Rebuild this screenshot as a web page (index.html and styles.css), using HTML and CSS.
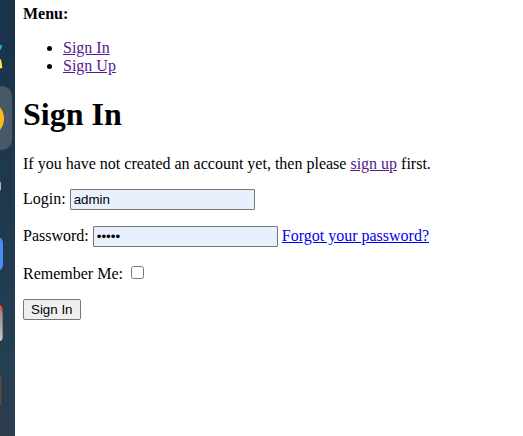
FILE: index.html
```html
<!DOCTYPE html>
<html lang="en"><head><meta charset="utf-8"><title>Sign In</title><link rel="stylesheet" href="styles.css"></head>
<body>
<aside class="dock">
<svg width="15" height="436" viewBox="0 0 15 436" aria-hidden="true">
<defs>
<linearGradient id="sky" x1="0" y1="0" x2="0" y2="1"><stop offset="0" stop-color="#18334a"/><stop offset=".5" stop-color="#20394e"/><stop offset=".85" stop-color="#253f53"/><stop offset="1" stop-color="#2c3d4d"/></linearGradient>
<linearGradient id="silver" x1="0" y1="0" x2="0" y2="1"><stop offset="0" stop-color="#8c8c8c"/><stop offset="1" stop-color="#c9c9c7"/></linearGradient>
</defs>
<rect width="15" height="436" fill="url(#sky)"/>
<path d="M0 45.5 1 44.5 2 46Q1.500 49 0 50Z" fill="#22b8f0"/>
<path d="M0 59 1.200 60 2.300 68 0 68.500Z" fill="#f8ef3c"/>
<rect x="-52" y="86" width="64" height="64" rx="10" fill="#475969"/>
<circle cx="-14" cy="118.500" r="18" fill="#fcbc14"/>
<path d="M0 181Q1.500 183 1 186 1.500 189 0 191Z" fill="#b9bec1"/>
<rect x="-32" y="237" width="35" height="34" rx="6" fill="#468cf7"/>
<rect x="-32" y="305" width="34.500" height="36" rx="4" fill="#f4511e"/>
<path d="M0 310H1.500V312.500H2.500V338Q2 341 0 341Z" fill="url(#silver)"/>
<rect x="-32" y="373" width="34.500" height="34.500" rx="4" fill="#4b4b4b" stroke="#262c30" stroke-width=".8"/>
</svg>
</aside>
<main class="page">
<p class="menu-title"><strong>Menu:</strong></p>
<ul class="menu"><li><a class="visited" href="#">Sign In</a></li><li><a class="visited" href="#">Sign Up</a></li></ul>
<h1>Sign In</h1>
<p>If you have not created an account yet, then please <a class="visited" href="#">sign up</a> first.</p>
<form>
<p>Login: <input class="field" type="text" value="admin"></p>
<p>Password: <input class="field" type="password" value="admin"> <a href="#">Forgot your password?</a></p>
<p>Remember Me: <input type="checkbox"></p>
<p><input class="submit" type="submit" value="Sign In"></p>
</form>
</main>
</body></html>
```
FILE: styles.css
```css
body { margin: 0; display: flex; height: 436px; overflow: hidden; font: 16px "Liberation Serif", serif; background: #fff; }
.dock { width: 15px; flex: none; background: #1d3a50; overflow: hidden; }
.dock svg { display: block; }
.page { flex: 1; padding: 5px 8px; }
.menu-title { margin: 0; }
.visited { color: #551a8b; }
.field { background: #e8f0fe; border: 1px solid #767676; border-radius: 1px; padding: 2px 3px; }
.submit { border: 1px solid #767676; border-radius: 2px; padding: 2px 7px; }
```
